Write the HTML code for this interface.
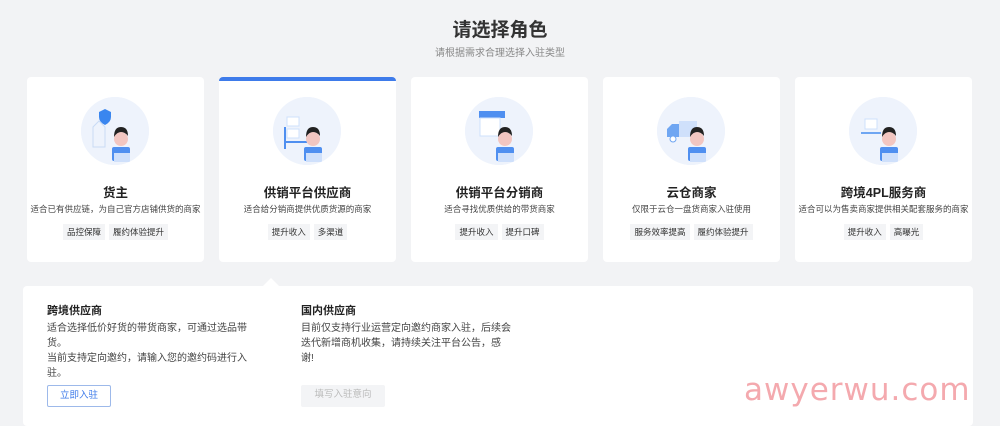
<!DOCTYPE html>
<html><head><meta charset="utf-8"><style>
*{margin:0;padding:0;box-sizing:border-box}
body{width:1000px;height:422px;background:#f2f3f5;font-family:"Liberation Sans","Noto Sans CJK SC",sans-serif;position:relative;overflow:hidden;color:#1f2329}
.h1{position:absolute;top:15px;left:0;width:1000px;text-align:center;font-size:19px;font-weight:bold;color:#333}
.sub{position:absolute;top:44px;left:0;width:1000px;text-align:center;font-size:10px;color:#888}
.card{position:absolute;top:77px;width:177px;height:185px;background:#fff;border-radius:4px;text-align:center}
.card.sel{border-top:4px solid #3e7bea}
.ic{position:absolute;left:54px;top:20px;width:68px;height:68px;border-radius:50%;background:#edf2fb}
.sel .ic{top:16px}
.t{position:absolute;top:105px;left:0;width:100%;font-size:12.5px;font-weight:bold;color:#222}
.d{position:absolute;top:126px;left:0;width:100%;font-size:8.5px;color:#444;white-space:nowrap}
.tags{position:absolute;top:145px;left:0;width:100%;text-align:center}
.sel .t{top:101px}.sel .d{top:122px}.sel .tags{top:141px}
.tags span{display:inline-block;background:#f3f4f6;font-size:8.5px;padding:2px 4px;margin:0 2px;color:#333}
.panel{position:absolute;left:23px;top:286px;width:950px;height:140px;background:#fff;border-radius:4px}
.notch{position:absolute;left:262px;top:278px;width:0;height:0;border-left:9px solid transparent;border-right:9px solid transparent;border-bottom:9px solid #fff}
.pt{position:absolute;font-size:11px;font-weight:bold;color:#222}
.pd{position:absolute;font-size:10px;line-height:15px;color:#444}
.btn{position:absolute;font-size:9.5px;text-align:center;line-height:20px;height:22px;border-radius:2px}
.wm{position:absolute;left:744px;top:372px;font-size:31px;color:#f4a9ae;font-family:"DejaVu Sans",sans-serif;letter-spacing:1px}
</style></head><body>
<div class="h1">请选择角色</div>
<div class="sub">请根据需求合理选择入驻类型</div>

<svg width="0" height="0" style="position:absolute"><defs>
<g id="man"><circle cx="40" cy="42" r="7" fill="#f2c6c1"/><path d="M33 40q0-10 7-10t7 9q-3-4-7-4t-7 5z" fill="#222"/><rect x="31" y="50" width="18" height="14" rx="2" fill="#4f8ff0"/><rect x="33" y="56" width="16" height="9" fill="#cfe0fb"/></g>
</defs></svg>

<div class="card" style="left:27px"><svg class="ic" viewBox="0 0 68 68"><circle cx="34" cy="34" r="34" fill="#eef3fc"/><path d="M24 12l6 3v5q0 5-6 8q-6-3-6-8v-5z" fill="#3a86ef"/><path d="M12 30l6-6 6 6v20h-12z" fill="none" stroke="#c9dbf5"/><use href="#man"/></svg><div class="t">货主</div><div class="d">适合已有供应链，为自己官方店铺供货的商家</div><div class="tags"><span>品控保障</span><span>履约体验提升</span></div></div>

<div class="card sel" style="left:219px"><svg class="ic" viewBox="0 0 68 68"><circle cx="34" cy="34" r="34" fill="#eef3fc"/><rect x="14" y="20" width="12" height="9" fill="#fff" stroke="#cfe0fb"/><rect x="14" y="32" width="12" height="9" fill="#fff" stroke="#cfe0fb"/><path d="M12 45h22M12 30v22" stroke="#4f8ff0" stroke-width="2"/><use href="#man"/></svg><div class="t">供销平台供应商</div><div class="d">适合给分销商提供优质货源的商家</div><div class="tags"><span>提升收入</span><span>多渠道</span></div></div>

<div class="card" style="left:411px"><svg class="ic" viewBox="0 0 68 68"><circle cx="34" cy="34" r="34" fill="#eef3fc"/><rect x="14" y="14" width="26" height="7" fill="#4f8ff0"/><rect x="15" y="21" width="20" height="18" fill="#fff" stroke="#cfe0fb"/><use href="#man"/></svg><div class="t">供销平台分销商</div><div class="d">适合寻找优质供给的带货商家</div><div class="tags"><span>提升收入</span><span>提升口碑</span></div></div>

<div class="card" style="left:603px"><svg class="ic" viewBox="0 0 68 68"><circle cx="34" cy="34" r="34" fill="#eef3fc"/><rect x="22" y="24" width="18" height="16" fill="#cfe0fb"/><path d="M10 40v-8l5-5h7v13z" fill="#6fa6f2"/><circle cx="16" cy="42" r="3" fill="#fff" stroke="#6fa6f2"/><use href="#man"/></svg><div class="t">云仓商家</div><div class="d">仅限于云仓一盘货商家入驻使用</div><div class="tags"><span>服务效率提高</span><span>履约体验提升</span></div></div>

<div class="card" style="left:795px"><svg class="ic" viewBox="0 0 68 68"><circle cx="34" cy="34" r="34" fill="#eef3fc"/><rect x="16" y="22" width="12" height="10" fill="#fff" stroke="#cfe0fb"/><path d="M12 36h20" stroke="#6fa6f2" stroke-width="2"/><use href="#man"/></svg><div class="t">跨境4PL服务商</div><div class="d">适合可以为售卖商家提供相关配套服务的商家</div><div class="tags"><span>提升收入</span><span>高曝光</span></div></div>

<div class="panel"></div><div class="notch"></div>
<div class="pt" style="left:47px;top:302px">跨境供应商</div>
<div class="pd" style="left:47px;top:321px;width:204px">适合选择低价好货的带货商家，可通过选品带货。<br>当前支持定向邀约，请输入您的邀约码进行入驻。</div>
<div class="btn" style="left:47px;top:385px;width:64px;border:1px solid #9db9ea;color:#3e7bea;background:#fff">立即入驻</div>
<div class="pt" style="left:301px;top:302px">国内供应商</div>
<div class="pd" style="left:301px;top:321px;width:212px">目前仅支持行业运营定向邀约商家入驻，后续会迭代新增商机收集，请持续关注平台公告，感谢!</div>
<div class="btn" style="left:301px;top:385px;width:84px;background:#f3f4f6;color:#bbb">填写入驻意向</div>
<div class="wm">awyerwu.com</div>
</body></html>
